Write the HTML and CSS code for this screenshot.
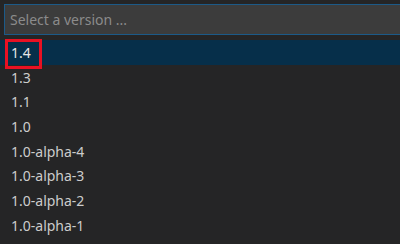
FILE: index.html
```html
<!DOCTYPE html>
<html lang="en">
<head>
    <meta charset="UTF-8">
    <title>Select a version</title>
    <link rel="stylesheet" href="styles.css">
</head>
<body>
    <!-- Selector de versiones estilo quick pick -->
    <div class="quick-pick">
        <div class="input-box">
            <input type="text" class="filter" placeholder="Select a version ...">
        </div>
        <ul class="list">
            <li class="item selected marked">1.4</li>
            <li class="item">1.3</li>
            <li class="item">1.1</li>
            <li class="item">1.0</li>
            <li class="item">1.0-alpha-4</li>
            <li class="item">1.0-alpha-3</li>
            <li class="item">1.0-alpha-2</li>
            <li class="item">1.0-alpha-1</li>
        </ul>
    </div>
</body>
</html>
```

FILE: styles.css
```css
/* Fondo general */
body {
    margin: 0;
    background: #252526;
    font-family: "Noto Sans", "Open Sans", sans-serif;
    overflow: hidden;
}
.quick-pick {
    width: 420px;
    padding-top: 4px;
}
/* Caja de filtro */
.input-box {
    margin-left: 4px;
}
.filter {
    box-sizing: border-box;
    width: 100%;
    height: 31px;
    padding: 0 5px;
    background: #3c3c3c;
    border: 1px solid #1c5a88;
    color: #cccccc;
    font-family: inherit;
    font-size: 14px;
    outline: none;
}
.filter::placeholder {
    color: #8b8b8b;
}
/* Lista de versiones */
.list {
    list-style: none;
    margin: 5px 0 0 0;
    padding: 0;
}
.item {
    height: 24.7px;
    display: flex;
    align-items: center;
    padding-left: 11px;
    color: #cccccc;
    font-size: 14px;
}
.item.selected {
    background: #062f4a;
    color: #e6e6e6;
}
/* Marco rojo de resaltado */
.item.marked {
    position: relative;
}
.item.marked::after {
    content: "";
    position: absolute;
    left: 5px;
    top: -1px;
    width: 31px;
    height: 24px;
    border: 3px solid #e81123;
}
```
